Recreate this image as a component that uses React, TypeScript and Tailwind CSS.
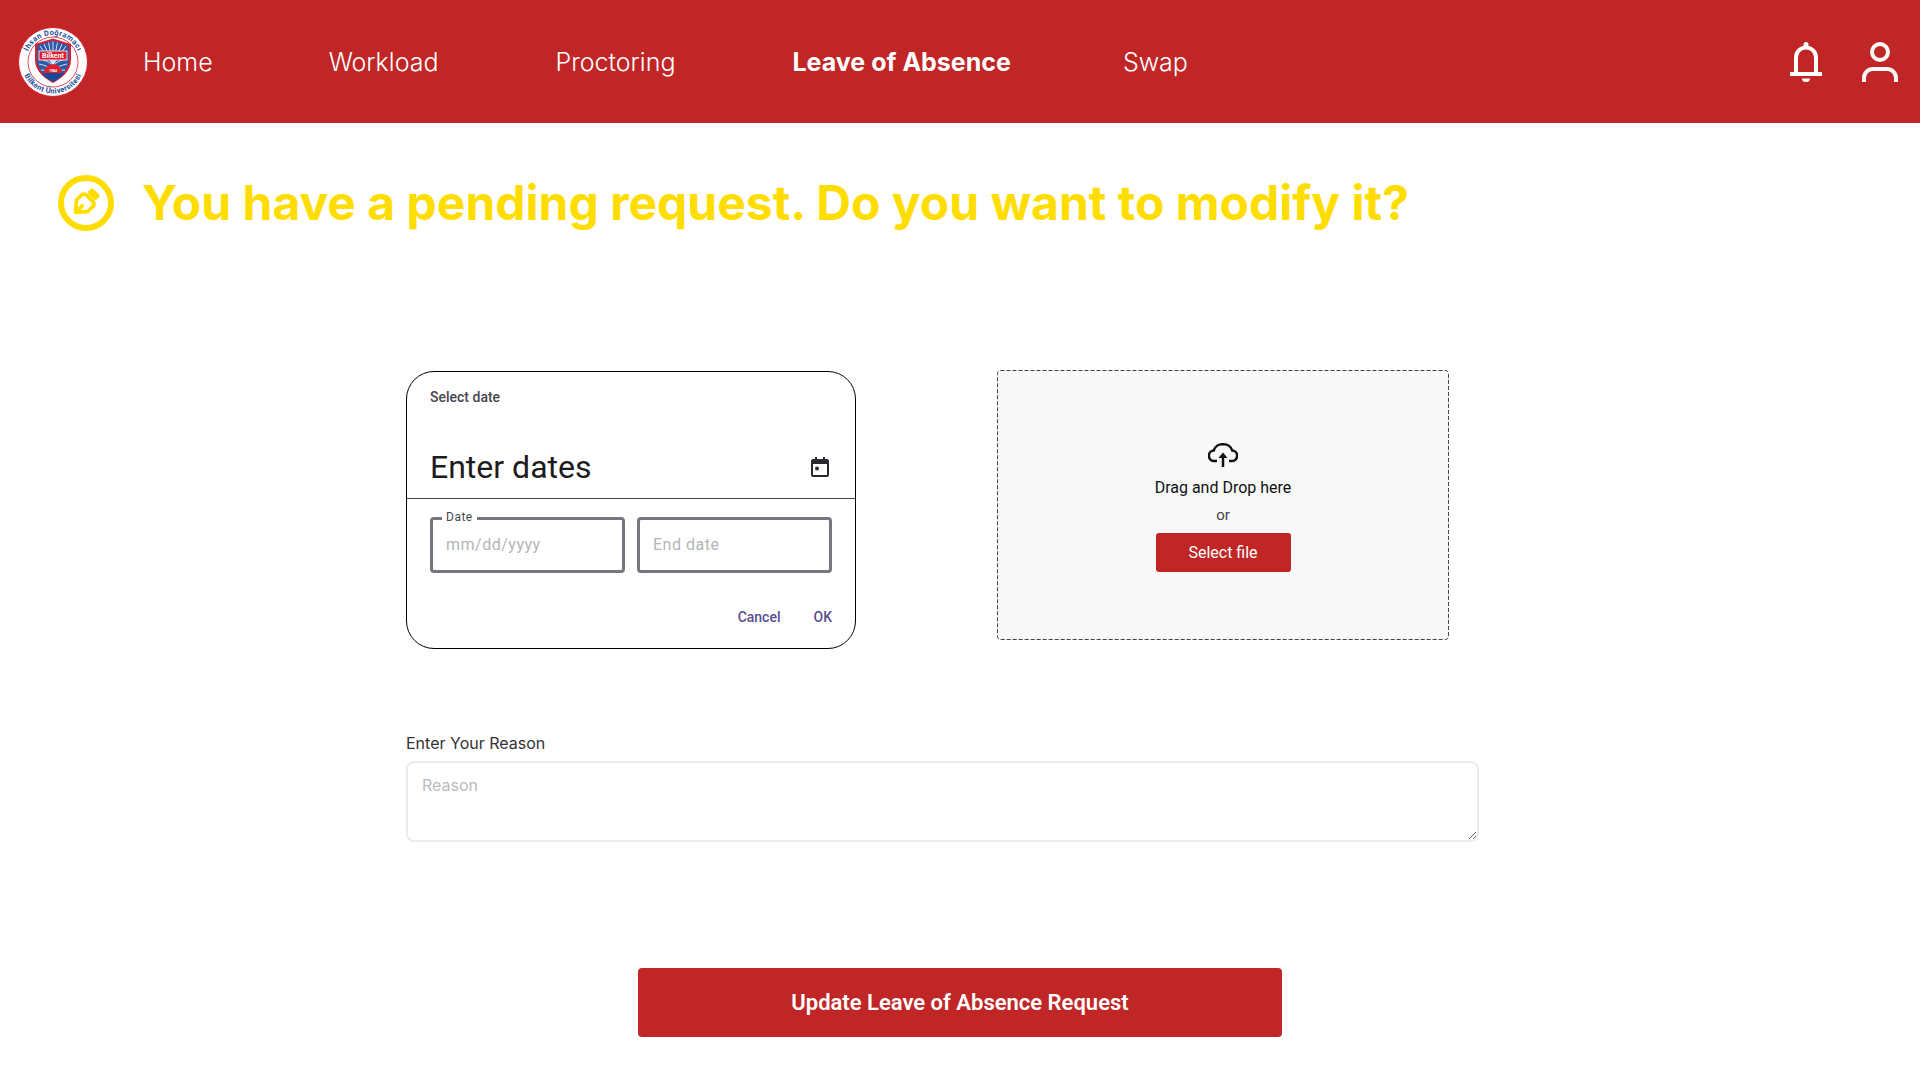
const navItems = [
  { label: "Home", className: "" },
  { label: "Workload", className: "ml-[116px]" },
  { label: "Proctoring", className: "ml-[117px]" },
  { label: "Leave of Absence", className: "ml-[117px] font-bold" },
  { label: "Swap", className: "ml-[112px]" },
];

const Logo = () => (
  <svg viewBox="0 0 70 70" className="w-[70px] h-[70px] shrink-0">
    <defs>
      <path id="arcTop" d="M8 35a27 27 0 0 1 54 0" />
      <path id="arcBottom" d="M3.500 35a31.500 31.500 0 0 0 63 0" />
    </defs>
    <circle cx="35" cy="35" r="34.5" fill="#fff" stroke="#e11d2e" strokeWidth="1" />
    <circle cx="35" cy="35" r="25" fill="#fff" stroke="#e11d2e" strokeWidth="0.8" />
    <text fontSize="7.500" fontWeight="700" fill="#1d4f9c" fontFamily="Roboto, sans-serif" letterSpacing="0.4">
      <textPath href="#arcTop" startOffset="50%" textAnchor="middle">İhsan Doğramacı</textPath>
    </text>
    <text fontSize="7.500" fontWeight="700" fill="#1d4f9c" fontFamily="Roboto, sans-serif" letterSpacing="0.3">
      <textPath href="#arcBottom" startOffset="50%" textAnchor="middle">Bilkent Üniversitesi</textPath>
    </text>
    <path d="M17 17l18-5.500 18 5.500v16c0 11-9 18-18 23-9-5-18-12-18-23z" fill="#e11d2e" />
    <path d="M19 18.500l16-5 16 5v14.500c0 10-8 16.500-16 21-8-4.500-16-11-16-21z" fill="#2a5aa8" />
    <g stroke="#fff" strokeWidth="0.8" fill="none">
      <path d="M35 38L22 19M35 38L26 17M35 38L30.500 15.500M35 38L35 14.500M35 38L39.500 15.500M35 38L44 17M35 38L48 19" />
      <path d="M21 32c6 1 11 3 14 7 3-4 8-6 14-7M21 37c5 1 10 3 14 6 4-3 9-5 14-6M23 43c4 0 9 1 12 3 3-2 8-3 12-3" />
    </g>
    <rect x="21" y="24" width="28" height="9" fill="#e11d2e" stroke="#fff" strokeWidth="0.8" />
    <text x="35" y="31" textAnchor="middle" fontSize="7" fontWeight="700" fill="#fff" fontFamily="Roboto, sans-serif">Bilkent</text>
    <path d="M26 46a9 9 0 0 1 18 0z" fill="#e11d2e" />
    <path d="M24 46h22c-2 4-6.500 6.500-11 9-4.500-2.500-9-5-11-9z" fill="#174a96" />
    <text x="35" y="44.500" textAnchor="middle" fontSize="3.500" fontWeight="700" fill="#fff" fontFamily="Roboto, sans-serif">1984</text>
  </svg>
);

const Bell = () => (
  <svg viewBox="0 0 32 40" className="w-8 h-10" fill="none" stroke="#fff" strokeWidth="4">
    <path d="M6 32V15.500a10 10 0 0 1 20 0V32" />
    <path d="M0 32h32" />
    <circle cx="16" cy="2.500" r="2.500" fill="#fff" stroke="none" />
    <path d="M12 36.500h8a4 3.500 0 0 1-8 0z" fill="#fff" stroke="none" />
  </svg>
);

const User = () => (
  <svg viewBox="0 0 36 40" className="w-9 h-10" fill="none" stroke="#f5f5f5" strokeWidth="4">
    <circle cx="18" cy="10" r="8" />
    <path d="M2 40v-4a9 9 0 0 1 9-9h14a9 9 0 0 1 9 9v4" />
  </svg>
);

const PenNib = () => (
  <svg viewBox="0 0 24 24" className="w-8 h-8 -translate-x-px" fill="none" stroke="#ffdd00" strokeWidth="2.800" strokeLinejoin="round" strokeLinecap="round">
    <g transform="rotate(45 12 12)">
      <rect x="9" y="1.500" width="6" height="2.500" fill="#ffdd00" />
      <path d="M6 8.500l2-1.500h8l2 1.500v6.500l-6 7-6-7z" />
      <path d="M12 21v-6" />
    </g>
  </svg>
);

const CalendarIcon = () => (
  <svg viewBox="0 0 18 20" className="w-[18px] h-5" fill="#2b2930">
    <path d="M4 0h2v2h6V0h2v2h2a2 2 0 0 1 2 2v14a2 2 0 0 1-2 2H2a2 2 0 0 1-2-2V4a2 2 0 0 1 2-2h2z" />
    <rect x="2" y="7" width="14" height="11" fill="#fff" />
    <circle cx="6" cy="11.500" r="2" />
  </svg>
);

const CloudIcon = () => (
  <svg viewBox="0 0 30 24" className="w-[30px] h-6" fill="none" stroke="#111" strokeWidth="2.500">
    <path d="M9 18H6.500a5.200 5.200 0 0 1-.8-10.400A9 9 0 0 1 15 1.300a9 9 0 0 1 9.300 6.300A5.200 5.200 0 0 1 23.500 18H21" />
    <path d="M15 24V13" />
    <path d="M10.500 15h9L15 9.500z" fill="#111" stroke="none" />
  </svg>
);

const DateCard = () => (
  <div className="w-[450px] h-[278px] mt-px rounded-[28px] border border-black bg-white font-['Roboto',sans-serif]">
    <div className="h-[127px] px-[23px] pt-[15px] border-b border-[#49454f]">
      <p className="text-sm leading-5 font-medium text-[#49454f]">Select date</p>
      <div className="mt-10 flex items-center justify-between pr-[3px]">
        <h2 className="text-[32px] leading-10 text-[#1d1b20]">Enter dates</h2>
        <CalendarIcon />
      </div>
    </div>
    <div className="flex gap-3 px-[23px] pt-[18px]">
      <div className="relative w-[195px] h-14 rounded border-[3px] border-[#79747e] flex items-center pl-[13px] text-base tracking-[0.5px] text-[#b5b5b5]">
        <span className="absolute -top-[11px] left-[9px] px-1 bg-white text-xs leading-4 text-[#49454f]">Date</span>
        mm/dd/yyyy
      </div>
      <div className="w-[195px] h-14 rounded border-[3px] border-[#79747e] flex items-center pl-[13px] text-base tracking-[0.5px] text-[#b5b5b5]">
        End date
      </div>
    </div>
    <div className="flex justify-end gap-[33px] px-[23px] mt-[34px] text-sm leading-5 font-medium text-[#5b4e8f]">
      <span>Cancel</span>
      <span>OK</span>
    </div>
  </div>
);

const DropZone = () => (
  <div className="relative w-[452px] h-[270px] rounded-[3px] bg-[#f8f8f8] flex flex-col items-center pt-[73px] font-['Roboto',sans-serif]">
    {/* dashes of the border are longer than the browser's own */}
    <svg className="absolute inset-0 w-full h-full" fill="none">
      <rect x="0.5" y="0.5" width="451" height="269" rx="3" stroke="#444" strokeDasharray="4 2" />
    </svg>
    <CloudIcon />
    <p className="mt-[9px] text-base leading-6 text-[#111]">Drag and Drop here</p>
    <p className="mt-[3px] text-[15px] leading-6 text-[#444]">or</p>
    <button className="relative mt-1.5 w-[135px] h-[39px] rounded-[3px] bg-[#c02626] text-base text-white">Select file</button>
  </div>
);

export default function App() {
  return (
    <div className="min-h-screen bg-white font-['Inter',sans-serif]">
      {/* Navbar */}
      <header className="h-[123px] bg-[#c02626] flex items-center pl-[18px] pr-[22px] text-white">
        <Logo />
        <nav className="ml-[55px] pt-0.5 flex items-center text-[25px] font-light">
          {navItems.map((item) => (
            <a key={item.label} className={item.className}>
              {item.label}
            </a>
          ))}
        </nav>
        <div className="ml-auto flex items-center gap-10">
          <Bell />
          <User />
        </div>
      </header>

      {/* Pending banner */}
      <div className="mt-[52px] pl-[58px] flex items-center gap-[28px]">
        <div className="w-14 h-14 rounded-full border-[6px] border-[#ffdd00] flex items-center justify-center shrink-0">
          <PenNib />
        </div>
        <h1 className="text-5xl leading-14 font-bold text-[#ffdd00]">You have a pending request. Do you want to modify it?</h1>
      </div>

      {/* Form */}
      <div className="mt-[139px] ml-[406px] w-[1073px]">
        <div className="flex items-start gap-[141px]">
          <DateCard />
          <DropZone />
        </div>
        <label className="block mt-[82px] text-base leading-6 text-[#333]">Enter Your Reason</label>
        <textarea
          placeholder="Reason"
          className="mt-[6px] block w-full h-[81px] rounded-lg border-2 border-[#ebebeb] px-3.5 py-2.5 text-base leading-6 placeholder:text-[#bbb] outline-none"
        />
      </div>

      <button className="mt-[126px] mx-auto block w-[644px] h-[69px] rounded bg-[#c02626] font-['Roboto',sans-serif] text-[22px] font-semibold text-white">
        Update Leave of Absence Request
      </button>
    </div>
  );
}
